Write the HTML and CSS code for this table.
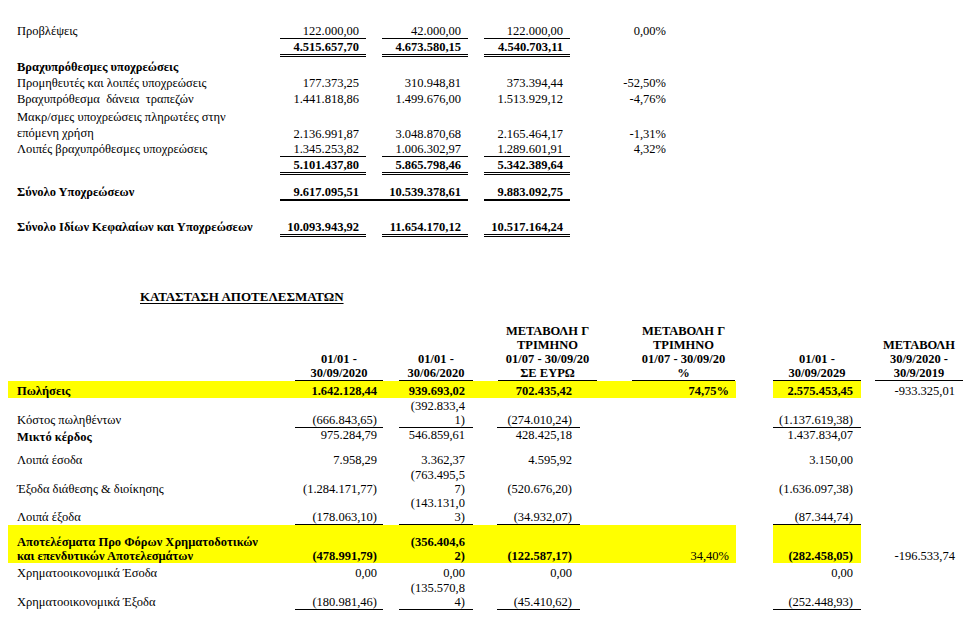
FILE: index.html
```html
<!DOCTYPE html>
<html lang="el">
<head>
<meta charset="utf-8">
<title>Κατάσταση Αποτελεσμάτων</title>
<link rel="stylesheet" href="styles.css">
</head>
<body>
<section class="bs">
  <div class="r">
    <div class="l pb1">Προβλέψεις</div>
    <div class="n u1">122.000,00</div>
    <div class="n u1">42.000,00</div>
    <div class="n u1">122.000,00</div>
    <div class="p pb1">0,00%</div>
  </div>
  <div class="r m1">
    <div></div>
    <div class="n b u2">4.515.657,70</div>
    <div class="n b u2">4.673.580,15</div>
    <div class="n b u2">4.540.703,11</div>
    <div></div>
  </div>
  <div class="r m3">
    <div class="l b">Βραχυπρόθεσμες υποχρεώσεις</div>
  </div>
  <div class="r m2">
    <div class="l">Προμηθευτές και λοιπές υποχρεώσεις</div>
    <div class="n">177.373,25</div>
    <div class="n">310.948,81</div>
    <div class="n">373.394,44</div>
    <div class="p">-52,50%</div>
  </div>
  <div class="r m2">
    <div class="l">Βραχυπρόθεσμα&nbsp; δάνεια&nbsp; τραπεζών</div>
    <div class="n">1.441.818,86</div>
    <div class="n">1.499.676,00</div>
    <div class="n">1.513.929,12</div>
    <div class="p">-4,76%</div>
  </div>
  <div class="r m3">
    <div class="l two">Μακρ/σμες υποχρεώσεις πληρωτέες στην<br>επόμενη χρήση</div>
    <div class="n">2.136.991,87</div>
    <div class="n">3.048.870,68</div>
    <div class="n">2.165.464,17</div>
    <div class="p">-1,31%</div>
  </div>
  <div class="r m1">
    <div class="l pb1">Λοιπές βραχυπρόθεσμες υποχρεώσεις</div>
    <div class="n u1">1.345.253,82</div>
    <div class="n u1">1.006.302,97</div>
    <div class="n u1">1.289.601,91</div>
    <div class="p pb1">4,32%</div>
  </div>
  <div class="r m1">
    <div></div>
    <div class="n b u2">5.101.437,80</div>
    <div class="n b u2">5.865.798,46</div>
    <div class="n b u2">5.342.389,64</div>
    <div></div>
  </div>
  <div class="r m10">
    <div class="l b pb2">Σύνολο Υποχρεώσεων</div>
    <div class="n b ut ext">9.617.095,51</div>
    <div class="n b ut">10.539.378,61</div>
    <div class="n b ut">9.883.092,75</div>
    <div></div>
  </div>
  <div class="r m19">
    <div class="l b pb3">Σύνολο Ιδίων Κεφαλαίων και Υποχρεώσεων</div>
    <div class="n b u2">10.093.943,92</div>
    <div class="n b u2">11.654.170,12</div>
    <div class="n b u2">10.517.164,24</div>
    <div></div>
  </div>
</section>

<h2 class="title">ΚΑΤΑΣΤΑΣΗ ΑΠΟΤΕΛΕΣΜΑΤΩΝ</h2>

<section class="pl">
  <div class="r hdr">
    <div class="c"></div>
    <div class="c c1"><div class="v h">01/01 -<br>30/09/2020</div></div>
    <div class="c c2"><div class="v h">01/01 -<br>30/06/2020</div></div>
    <div class="c c3"><div class="v h">ΜΕΤΑΒΟΛΗ Γ<br>ΤΡΙΜΗΝΟ<br>01/07 - 30/09/20<br>ΣΕ ΕΥΡΩ</div></div>
    <div class="c c4"><div class="v h">ΜΕΤΑΒΟΛΗ Γ<br>ΤΡΙΜΗΝΟ<br>01/07 - 30/09/20<br>%</div></div>
    <div class="c"></div>
    <div class="c c5"><div class="v h">01/01 -<br>30/09/2029</div></div>
    <div class="c c6"><div class="v h">ΜΕΤΑΒΟΛΗ<br>30/9/2020 -<br>30/9/2019</div></div>
  </div>

  <div class="r h17 b">
    <div class="c y lbl">Πωλήσεις</div>
    <div class="c y c1"><div class="v">1.642.128,44</div></div>
    <div class="c y c2"><div class="v">939.693,02</div></div>
    <div class="c y c3"><div class="v">702.435,42</div></div>
    <div class="c y c4"><div class="v">74,75%</div></div>
    <div class="c"></div>
    <div class="c y c5"><div class="v">2.575.453,45</div></div>
    <div class="c c6"><div class="v nb">-933.325,01</div></div>
  </div>

  <div class="r h30">
    <div class="c lbl pb1">Κόστος πωληθέντων</div>
    <div class="c c1"><div class="v u1">(666.843,65)</div></div>
    <div class="c c2"><div class="v u1">(392.833,4<br>1)</div></div>
    <div class="c c3"><div class="v u1">(274.010,24)</div></div>
    <div class="c c4"></div>
    <div class="c"></div>
    <div class="c c5"><div class="v u1">(1.137.619,38)</div></div>
    <div class="c c6"></div>
  </div>

  <div class="r h25 top">
    <div class="c lbl b pt2">Μικτό κέρδος</div>
    <div class="c c1"><div class="v">975.284,79</div></div>
    <div class="c c2"><div class="v">546.859,61</div></div>
    <div class="c c3"><div class="v">428.425,18</div></div>
    <div class="c c4"></div>
    <div class="c"></div>
    <div class="c c5"><div class="v">1.437.834,07</div></div>
    <div class="c c6"></div>
  </div>

  <div class="r h15 pbr">
    <div class="c lbl">Λοιπά έσοδα</div>
    <div class="c c1"><div class="v">7.958,29</div></div>
    <div class="c c2"><div class="v">3.362,37</div></div>
    <div class="c c3"><div class="v">4.595,92</div></div>
    <div class="c c4"></div>
    <div class="c"></div>
    <div class="c c5"><div class="v">3.150,00</div></div>
    <div class="c c6"></div>
  </div>

  <div class="r h28">
    <div class="c lbl">Έξοδα διάθεσης &amp; διοίκησης</div>
    <div class="c c1"><div class="v">(1.284.171,77)</div></div>
    <div class="c c2"><div class="v">(763.495,5<br>7)</div></div>
    <div class="c c3"><div class="v">(520.676,20)</div></div>
    <div class="c c4"></div>
    <div class="c"></div>
    <div class="c c5"><div class="v">(1.636.097,38)</div></div>
    <div class="c c6"></div>
  </div>

  <div class="r h29">
    <div class="c lbl pb1">Λοιπά έξοδα</div>
    <div class="c c1"><div class="v u1">(178.063,10)</div></div>
    <div class="c c2"><div class="v u1">(143.131,0<br>3)</div></div>
    <div class="c c3"><div class="v u1">(34.932,07)</div></div>
    <div class="c c4"></div>
    <div class="c"></div>
    <div class="c c5"><div class="v u1">(87.344,74)</div></div>
    <div class="c c6"></div>
  </div>

  <div class="r h38">
    <div class="c y lbl b">Αποτελέσματα Προ Φόρων Χρηματοδοτικών<br>και επενδυτικών Αποτελεσμάτων</div>
    <div class="c y c1"><div class="v b">(478.991,79)</div></div>
    <div class="c y c2"><div class="v b">(356.404,6<br>2)</div></div>
    <div class="c y c3"><div class="v b">(122.587,17)</div></div>
    <div class="c y c4"><div class="v">34,40%</div></div>
    <div class="c"></div>
    <div class="c y c5"><div class="v b">(282.458,05)</div></div>
    <div class="c c6"><div class="v">-196.533,74</div></div>
  </div>

  <div class="r h17">
    <div class="c lbl">Χρηματοοικονομικά Έσοδα</div>
    <div class="c c1"><div class="v">0,00</div></div>
    <div class="c c2"><div class="v">0,00</div></div>
    <div class="c c3"><div class="v">0,00</div></div>
    <div class="c c4"></div>
    <div class="c"></div>
    <div class="c c5"><div class="v">0,00</div></div>
    <div class="c c6"></div>
  </div>

  <div class="r h30">
    <div class="c lbl pb1">Χρηματοοικονομικά Έξοδα</div>
    <div class="c c1"><div class="v u1">(180.981,46)</div></div>
    <div class="c c2"><div class="v u1">(135.570,8<br>4)</div></div>
    <div class="c c3"><div class="v u1">(45.410,62)</div></div>
    <div class="c c4"></div>
    <div class="c"></div>
    <div class="c c5"><div class="v u1">(252.448,93)</div></div>
    <div class="c c6"></div>
  </div>
</section>
</body>
</html>
```

FILE: styles.css
```css
* { box-sizing: border-box; }

body {
  margin: 0;
  background: #fff;
  color: #000;
  font-family: "Liberation Serif", "Times New Roman", serif;
  font-size: 12.5px;
}

.b { font-weight: bold; }
.u1 { border-bottom: 1px solid #000; }
.u2 { border-bottom: 3px double #000; }
.ut { border-bottom: 2px solid #000; }
.pb1 { padding-bottom: 1px; }
.pb2 { padding-bottom: 2px; }
.pb3 { padding-bottom: 3px; }
.pt2 { padding-top: 2px; }

/* ---------- balance sheet part ---------- */
.bs { padding-top: 24px; }

.bs .r {
  display: grid;
  grid-template-columns: 247px 86px 86px 86px 80px;
  column-gap: 16px;
  margin-left: 17px;
  align-items: end;
  line-height: 14px;
}

.bs .l { white-space: nowrap; }
.bs .two { line-height: 16px; }
.bs .n { text-align: right; padding-right: 7px; white-space: nowrap; }
.bs .p { text-align: right; }
.bs .ext { margin-right: -16px; padding-right: 23px; }

.m1 { margin-top: 1px; }
.m2 { margin-top: 2px; }
.m3 { margin-top: 3px; }
.m10 { margin-top: 10px; }
.m19 { margin-top: 19px; }

/* ---------- title ---------- */
.title {
  margin: 53px 0 0 140px;
  font-size: 13px;
  line-height: 14px;
  font-weight: bold;
  text-decoration: underline;
  text-underline-offset: 2px;
}

/* ---------- income statement ---------- */
.pl { margin-top: 20px; }

.pl .r {
  display: grid;
  grid-template-columns: 283px 100px 98px 126px 121px 37px 88px 102px;
  margin-left: 8px;
  line-height: 14px;
}

.pl .c {
  display: flex;
  flex-direction: column;
  justify-content: flex-end;
  white-space: nowrap;
}

.pl .top .c { justify-content: flex-start; }
.pl .pbr .c { padding-bottom: 1px; }

.pl .y { background: #ffff00; }
.pl .lbl { padding-left: 9px; }

.pl .v { text-align: right; }
.pl .h {
  text-align: center;
  font-weight: bold;
  border-bottom: 1px solid #000;
}

.pl .c1 .v { margin: 0 8px 0 4px; padding-right: 6px; }
.pl .c2 .v { margin: 0 16px 0 8px; padding-right: 8px; }
.pl .c3 .v { margin: 0 35px 0 8px; padding-right: 8px; }
.pl .c3 .h { margin: 0 18px 0 9px; padding-right: 0; }
.pl .c4 .v { margin: 0; padding-right: 7px; }
.pl .c4 .h { margin: 0 1px 0 17px; padding-right: 0; }
.pl .c5 .v { margin: 0; padding-right: 8px; }
.pl .c5 .h { padding-right: 0; }
.pl .c6 .v { margin: 0 0 0 14px; padding-right: 8px; }
.pl .c6 .h { padding-right: 0; }
.pl .c1 .h, .pl .c2 .h { padding-right: 0; }
.pl .nb { font-weight: normal; }

.hdr { height: 57px; }
.h15 { height: 15px; }
.h17 { height: 17px; }
.h25 { height: 25px; }
.h28 { height: 28px; }
.h29 { height: 29px; }
.h30 { height: 30px; }
.h38 { height: 38px; }
```
